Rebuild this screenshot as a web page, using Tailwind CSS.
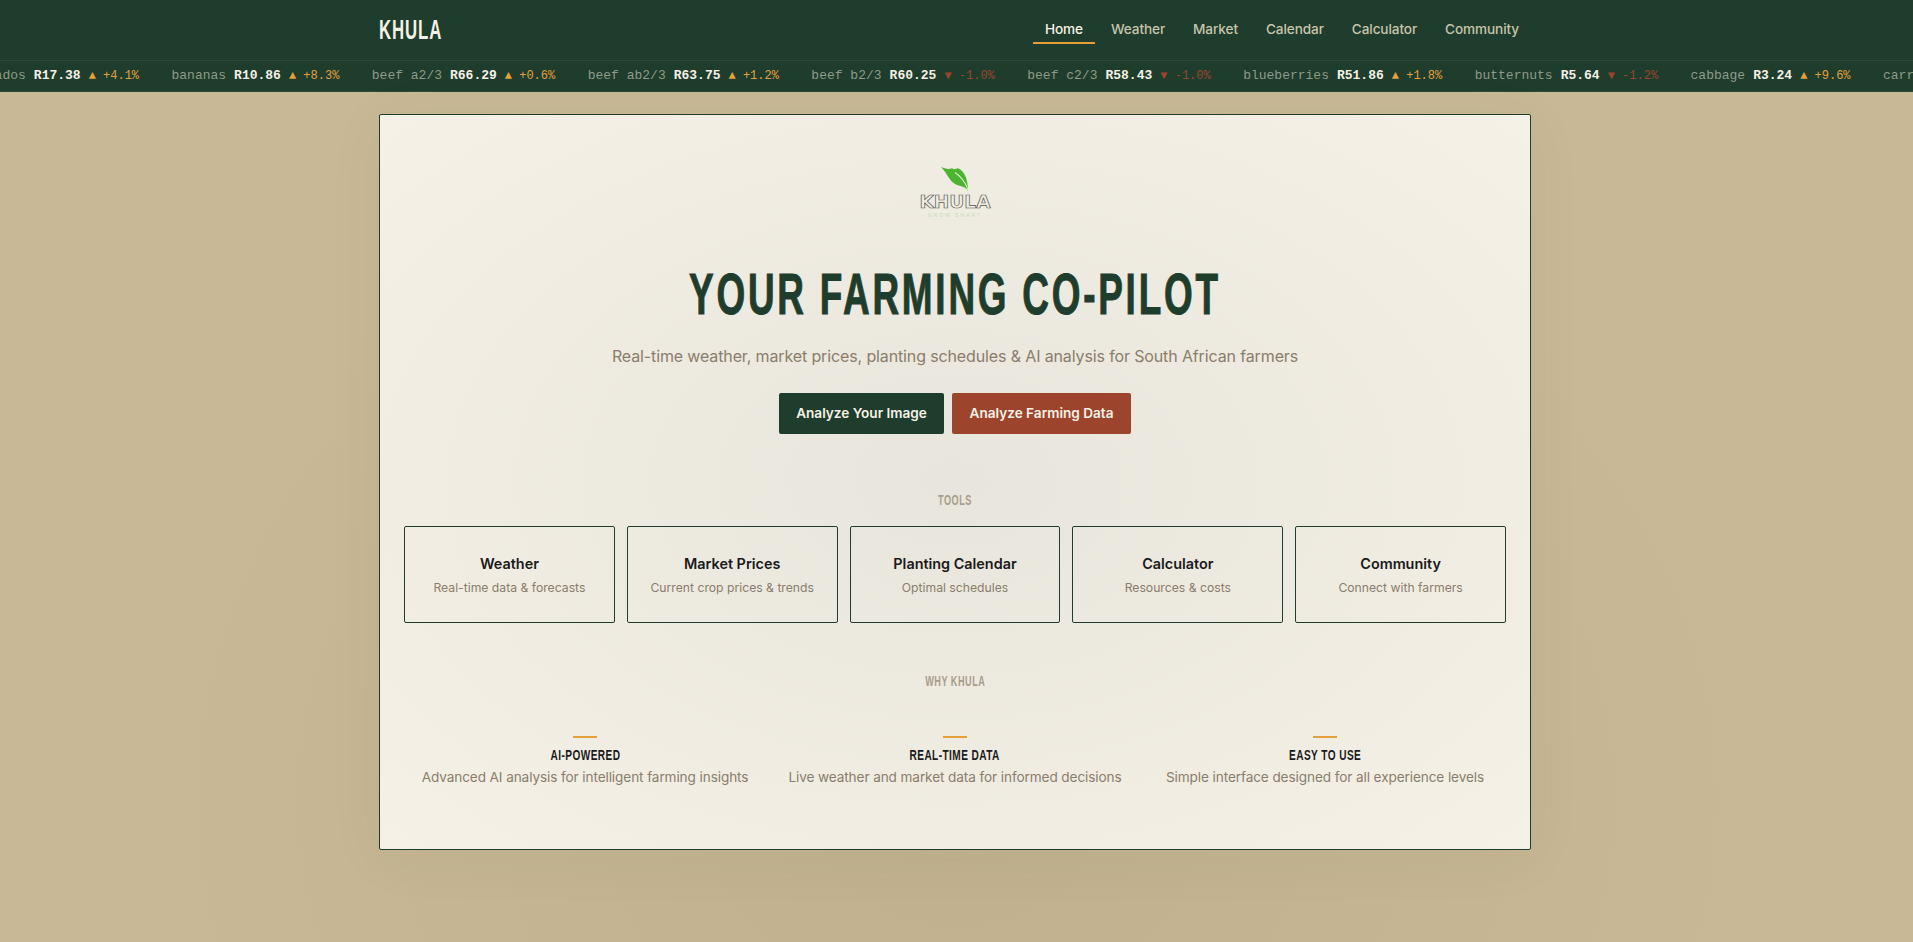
<!DOCTYPE html>
<html lang="en">
<head>
    <meta charset="UTF-8">
    <meta name="viewport" content="width=device-width, initial-scale=1.0">
    <title>Khula</title>
    <script src="https://cdn.jsdelivr.net/npm/@tailwindcss/browser@4"></script>
</head>
<body class="min-h-screen overflow-hidden bg-[radial-gradient(ellipse_at_50%_85%,#c0b08e,#c8b896_60%)] pr-[3px] font-['Inter',sans-serif] text-[#1a1a1a]">
    <header class="mr-[-3px] bg-[#1f3d2c]">
        <div class="ml-[379px] flex h-[60px] w-[1152px] items-center justify-between">
            <a class="inline-block origin-left scale-x-[0.6] font-['Liberation_Sans',sans-serif] text-[28px] font-bold leading-none tracking-[1.5px] text-[#f5f1e6]">KHULA</a>
            <nav class="mt-[-2px] flex gap-1 text-[13.6px] font-medium tracking-[-0.1px] text-[#c8c4ab]">
                <a class="border-b-2 border-[#e5a03c] px-3 pb-[3px] pt-[5px] text-[#f5f1e6]">Home</a>
                <a class="border-b-2 border-transparent px-3 pb-[3px] pt-[5px]">Weather</a>
                <a class="border-b-2 border-transparent px-3 pb-[3px] pt-[5px]">Market</a>
                <a class="border-b-2 border-transparent px-3 pb-[3px] pt-[5px]">Calendar</a>
                <a class="border-b-2 border-transparent px-3 pb-[3px] pt-[5px]">Calculator</a>
                <a class="border-b-2 border-transparent px-3 pb-[3px] pt-[5px]">Community</a>
            </nav>
        </div>
        <div id="ticker" class="flex h-[32px] items-center gap-[32.45px] overflow-hidden whitespace-nowrap border-y border-[#2b4a38] font-['Liberation_Mono',monospace] text-[13px] [&>*:first-child]:ml-[-36.6px]"></div>
    </header>

    <main class="mx-auto mt-[22px] flex h-[736px] w-[1152px] flex-col items-center rounded-[2px] border border-[#1f3d2c] bg-[radial-gradient(ellipse_at_center,#e8e5dc,#f5f1e6_100%)] px-6 pt-[51px] shadow-[0_8px_60px_rgba(90,70,40,0.05)]">
        <div class="flex flex-col items-center">
            <svg width="30" height="26" viewBox="0 0 30 24" preserveAspectRatio="none" class="ml-[1px]">
                <path d="M1 1 C6 3 9 3 12 2 L14 3 L18 2 L20 3 C25 6 28 13 28 23 C26 19 21 19 16 17 C10 15 8 8 1 1 Z" fill="#4cb52f"/>
                <path d="M15 6 C20 9 25 14 28 22" fill="none" stroke="#e4f2dc" stroke-width="1"/>
            </svg>
            <div class="mt-[1px] font-['DejaVu_Sans',sans-serif] text-[18.5px] font-bold leading-[18px] text-transparent [-webkit-text-stroke:0.7px_#55584f]">KHULA</div>
            <div class="mt-[1px] font-['Liberation_Sans',sans-serif] text-[5px] leading-[6px] tracking-[1.9px] text-[#bfe0ae]">GROW SMART</div>
        </div>

        <h1 class="mt-[45px] scale-x-[0.647] font-['Liberation_Sans',sans-serif] text-[57px] font-bold leading-[62px] tracking-[4.3px] text-[#1f3d2c] [-webkit-text-stroke:1px_#1f3d2c]">YOUR FARMING CO-PILOT</h1>
        <p class="mt-[19px] text-[16px] leading-6 tracking-[-0.13px] text-[#8a7d6b]">Real-time weather, market prices, planting schedules &amp; AI analysis for South African farmers</p>

        <div class="mt-[25px] flex gap-2 text-[13.6px] font-semibold text-[#f5f1e6]">
            <button class="h-[41px] w-[165px] rounded-[2px] bg-[#1f3d2c]">Analyze Your Image</button>
            <button class="h-[41px] w-[179px] rounded-[2px] bg-[#9c452c]">Analyze Farming Data</button>
        </div>

        <h2 class="mt-[57px] scale-x-[0.65] font-['Liberation_Sans',sans-serif] text-[14px] font-bold leading-[18px] tracking-[0.8px] text-[#a89d8a]">TOOLS</h2>
        <div class="mt-[17px] grid w-full grid-cols-5 gap-3">
            <div class="flex h-[97px] flex-col items-center justify-center rounded-[2px] border border-[#1f3d2c]">
                <h3 class="text-[14.4px] font-semibold leading-6">Weather</h3>
                <p class="mt-[2px] text-[12.2px] leading-5 text-[#8a7d6b]">Real-time data &amp; forecasts</p>
            </div>
            <div class="flex h-[97px] flex-col items-center justify-center rounded-[2px] border border-[#1f3d2c]">
                <h3 class="text-[14.4px] font-semibold leading-6">Market Prices</h3>
                <p class="mt-[2px] text-[12.2px] leading-5 text-[#8a7d6b]">Current crop prices &amp; trends</p>
            </div>
            <div class="flex h-[97px] flex-col items-center justify-center rounded-[2px] border border-[#1f3d2c]">
                <h3 class="text-[14.4px] font-semibold leading-6">Planting Calendar</h3>
                <p class="mt-[2px] text-[12.2px] leading-5 text-[#8a7d6b]">Optimal schedules</p>
            </div>
            <div class="flex h-[97px] flex-col items-center justify-center rounded-[2px] border border-[#1f3d2c]">
                <h3 class="text-[14.4px] font-semibold leading-6">Calculator</h3>
                <p class="mt-[2px] text-[12.2px] leading-5 text-[#8a7d6b]">Resources &amp; costs</p>
            </div>
            <div class="flex h-[97px] flex-col items-center justify-center rounded-[2px] border border-[#1f3d2c]">
                <h3 class="text-[14.4px] font-semibold leading-6">Community</h3>
                <p class="mt-[2px] text-[12.2px] leading-5 text-[#8a7d6b]">Connect with farmers</p>
            </div>
        </div>

        <h2 class="mt-[49px] scale-x-[0.65] font-['Liberation_Sans',sans-serif] text-[14px] font-bold leading-[18px] tracking-[0.8px] text-[#a89d8a]">WHY KHULA</h2>
        <div class="mt-[46px] grid w-full grid-cols-3 gap-2 text-center">
            <div class="flex flex-col items-center">
                <div class="h-[2px] w-6 bg-[#e5a03c]"></div>
                <h3 class="mt-[7px] scale-x-[0.72] font-['Liberation_Sans',sans-serif] text-[14px] font-bold leading-5 tracking-[0.6px]">AI-POWERED</h3>
                <p class="mt-[2px] text-[13.6px] leading-5 tracking-[-0.1px] text-[#8a7d6b]">Advanced AI analysis for intelligent farming insights</p>
            </div>
            <div class="flex flex-col items-center">
                <div class="h-[2px] w-6 bg-[#e5a03c]"></div>
                <h3 class="mt-[7px] scale-x-[0.72] font-['Liberation_Sans',sans-serif] text-[14px] font-bold leading-5 tracking-[0.6px]">REAL-TIME DATA</h3>
                <p class="mt-[2px] text-[13.6px] leading-5 tracking-[-0.1px] text-[#8a7d6b]">Live weather and market data for informed decisions</p>
            </div>
            <div class="flex flex-col items-center">
                <div class="h-[2px] w-6 bg-[#e5a03c]"></div>
                <h3 class="mt-[7px] scale-x-[0.72] font-['Liberation_Sans',sans-serif] text-[14px] font-bold leading-5 tracking-[0.6px]">EASY TO USE</h3>
                <p class="mt-[2px] text-[13.6px] leading-5 tracking-[-0.1px] text-[#8a7d6b]">Simple interface designed for all experience levels</p>
            </div>
        </div>
    </main>

    <script>
        const prices = [
            ["avocados", "R17.38", 4.1],
            ["bananas", "R10.86", 8.3],
            ["beef a2/3", "R66.29", 0.6],
            ["beef ab2/3", "R63.75", 1.2],
            ["beef b2/3", "R60.25", -1.0],
            ["beef c2/3", "R58.43", -1.0],
            ["blueberries", "R51.86", 1.8],
            ["butternuts", "R5.64", -1.2],
            ["cabbage", "R3.24", 9.6],
            ["carrots", "R6.12", 2.4]
        ];

        document.getElementById("ticker").innerHTML = prices.map(([name, price, change]) => {
            const up = change >= 0;
            const label = (up ? "▲ +" : "▼ -") + Math.abs(change).toFixed(1) + "%";
            return `<span class="flex shrink-0 items-baseline gap-2">
                <span class="text-[#8f9a88]">${name}</span>
                <span class="font-bold text-[#f5f1e6]">${price}</span>
                <span class="text-[12px] ${up ? "text-[#e5a03c]" : "text-[#9c452c]"}">${label}</span>
            </span>`;
        }).join("");
    </script>
</body>
</html>
